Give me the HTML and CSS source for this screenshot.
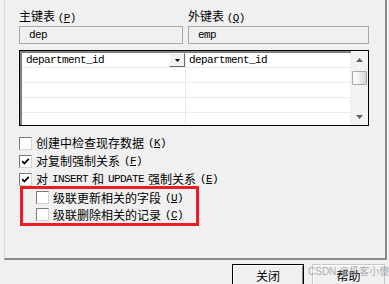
FILE: index.html
```html
<!DOCTYPE html>
<html lang="zh-CN">
  <head>
    <meta charset="UTF-8" />
    <meta name="viewport" content="width=device-width, initial-scale=1.0" />
    <title>外键</title>
    <link rel="stylesheet" href="styles.css">
  </head>
  <body>
    <div class="panel">
      <div class="tables">
        <label>主键表 <span class="key">(<u>P</u>)</span></label>
        <label>外键表 <span class="key">(<u>Q</u>)</span></label>
        <div class="field">dep</div>
        <div class="field">emp</div>
      </div>

      <!-- column mapping -->
      <div class="grid">
        <div class="cols">
          <div class="row">
            <div class="cell first">
              <span>department_id</span>
              <span class="drop">
                <svg width="5" height="3" viewBox="0 0 5 3"><path d="M0 0h5L2.5 3z" /></svg>
              </span>
            </div>
            <div class="cell">department_id</div>
          </div>
          <div class="row"><div class="cell"></div><div class="cell"></div></div>
          <div class="row"><div class="cell"></div><div class="cell"></div></div>
          <div class="row"><div class="cell"></div><div class="cell"></div></div>
          <div class="row"><div class="cell"></div><div class="cell"></div></div>
        </div>
        <div class="vscroll">
          <div class="arrow">
            <svg width="7" height="4" viewBox="0 0 7 4"><path d="M3.5 0L7 4H0z" /></svg>
          </div>
          <div class="thumb"></div>
          <div class="arrow down">
            <svg width="7" height="4" viewBox="0 0 7 4"><path d="M0 0h7L3.5 4z" /></svg>
          </div>
        </div>
      </div>

      <div class="opts">
        <div class="opt"><span class="box"></span>创建中检查现存数据 <span class="key">(<u>K</u>)</span></div>
        <div class="opt"><span class="box on"><svg width="9" height="9" viewBox="0 0 9 9"><path d="M1.2 4.2l2.2 2.3 4.4-4.6" /></svg></span>对复制强制关系 <span class="key">(<u>F</u>)</span></div>
        <div class="opt"><span class="box on"><svg width="9" height="9" viewBox="0 0 9 9"><path d="M1.2 4.2l2.2 2.3 4.4-4.6" /></svg></span>对 <span class="en">INSERT</span> 和 <span class="en">UPDATE</span> 强制关系 <span class="key">(<u>E</u>)</span></div>
        <div class="mark">
          <div class="opt small"><span class="box"></span>级联更新相关的字段 <span class="key">(<u>U</u>)</span></div>
          <div class="opt small"><span class="box"></span>级联删除相关的记录 <span class="key">(<u>C</u>)</span></div>
        </div>
      </div>
    </div>

    <div class="actions">
      <button class="btn default">关闭</button>
      <button class="btn">帮助</button>
    </div>

    <div class="watermark">CSDN @极客小傻</div>
  </body>
</html>
```

FILE: styles.css
```css
body {
  margin: 0;
  width: 389px;
  height: 284px;
  overflow: hidden;
  position: relative;
  background: #f0f0f0;
  color: #000;
  font: 12px/14px "Noto Sans CJK SC", sans-serif;
}
u {
  text-decoration: underline;
  text-underline-offset: 1px;
}
.key {
  font: 11px "Liberation Mono", monospace;
  letter-spacing: -0.6px;
}
.panel {
  margin-left: 4px;
  width: 383px;
  height: 260px;
  box-sizing: border-box;
  border-left: 1px solid #d8d8d8;
  border-right: 2px solid #8a8a8a;
  border-bottom: 2px solid #8a8a8a;
  padding: 9px 0 0 14px;
}
.tables {
  display: grid;
  grid-template-columns: 164px 181px;
  column-gap: 5px;
  row-gap: 3px;
}
.tables label {
  height: 14px;
}
.field {
  height: 18px;
  box-sizing: border-box;
  border: 1px solid #a8a8a8;
  padding-left: 9px;
  font: 11px/16px "Liberation Mono", monospace;
  letter-spacing: -0.6px;
}
.grid {
  margin-top: 6px;
  width: 350px;
  height: 76px;
  box-sizing: border-box;
  border: 1px solid #000;
  background: #fff;
  box-shadow: inset 2px 2px 0 #808080;
  display: flex;
  overflow: hidden;
}
.cols {
  flex: 1;
  padding: 2px 0 0 2px;
  overflow: hidden;
}
.row {
  display: grid;
  grid-template-columns: 164px 1fr;
  height: 15px;
  box-sizing: border-box;
  border-bottom: 1px solid #ececec;
}
.cell {
  border-right: 1px solid #ececec;
  padding-left: 3px;
  font: 11px/14px "Liberation Mono", monospace;
  letter-spacing: -0.6px;
  display: flex;
  align-items: center;
  justify-content: space-between;
}
.cell.first {
  padding-left: 4px;
}
.drop {
  width: 16px;
  height: 14px;
  box-sizing: border-box;
  border: 1px solid;
  border-color: #fff #6a6a6a #6a6a6a #fff;
  background: #f0f0f0;
  display: grid;
  place-content: center;
}
.drop svg {
  display: block;
  fill: #000;
}
.vscroll {
  width: 17px;
  background: #f2f2f2;
  display: flex;
  flex-direction: column;
  align-items: center;
}
.arrow {
  height: 17px;
  display: grid;
  place-content: center;
}
.arrow svg {
  display: block;
  fill: #606060;
}
.arrow.down {
  margin-top: auto;
}
.thumb {
  margin-top: 3px;
  width: 15px;
  height: 14px;
  box-sizing: border-box;
  border: 1px solid #a9a9a9;
  border-radius: 1px;
  background: linear-gradient(to right, #f8f8f8 30%, #d4d4d4);
}
.opts {
  margin-top: 8px;
}
.opt {
  height: 18px;
  display: flex;
  align-items: center;
  gap: 4px;
  white-space: nowrap;
}
.opt.small {
  height: 17px;
}
.en {
  font: 11px "Liberation Mono", monospace;
  letter-spacing: -0.6px;
}
.box {
  width: 13px;
  height: 13px;
  flex: none;
  box-sizing: border-box;
  border: 1px solid;
  border-color: #7a7a7a #d4d4d4 #d4d4d4 #7a7a7a;
  background: #fff;
  display: grid;
  place-content: center;
}
.box svg {
  display: block;
  fill: none;
  stroke: #000;
  stroke-width: 1.8;
}
.mark {
  margin: -2px 0 0 1px;
  width: 179px;
  box-sizing: border-box;
  border: 3px solid #ec1c24;
  padding-left: 13px;
}
.actions {
  margin-top: 4px;
  padding-right: 4px;
  display: flex;
  justify-content: flex-end;
  gap: 8px;
}
.btn {
  width: 73px;
  height: 23px;
  box-sizing: border-box;
  border: 1px solid #c8c8c8;
  background: #f0f0f0;
  box-shadow: inset 1px 1px 0 #fff;
  font: 12px/14px "Noto Sans CJK SC", sans-serif;
  color: #000;
  padding: 0;
}
.btn.default {
  width: 72px;
  border-color: #000;
  box-shadow: inset 1px 1px 0 #fff, inset -1px -1px 0 #808080;
}
.watermark {
  position: absolute;
  left: 308px;
  top: 266px;
  font: 10px/12px "Liberation Sans", "Noto Sans CJK SC", sans-serif;
  color: rgba(150, 150, 150, 0.75);
  white-space: nowrap;
  pointer-events: none;
}
```
